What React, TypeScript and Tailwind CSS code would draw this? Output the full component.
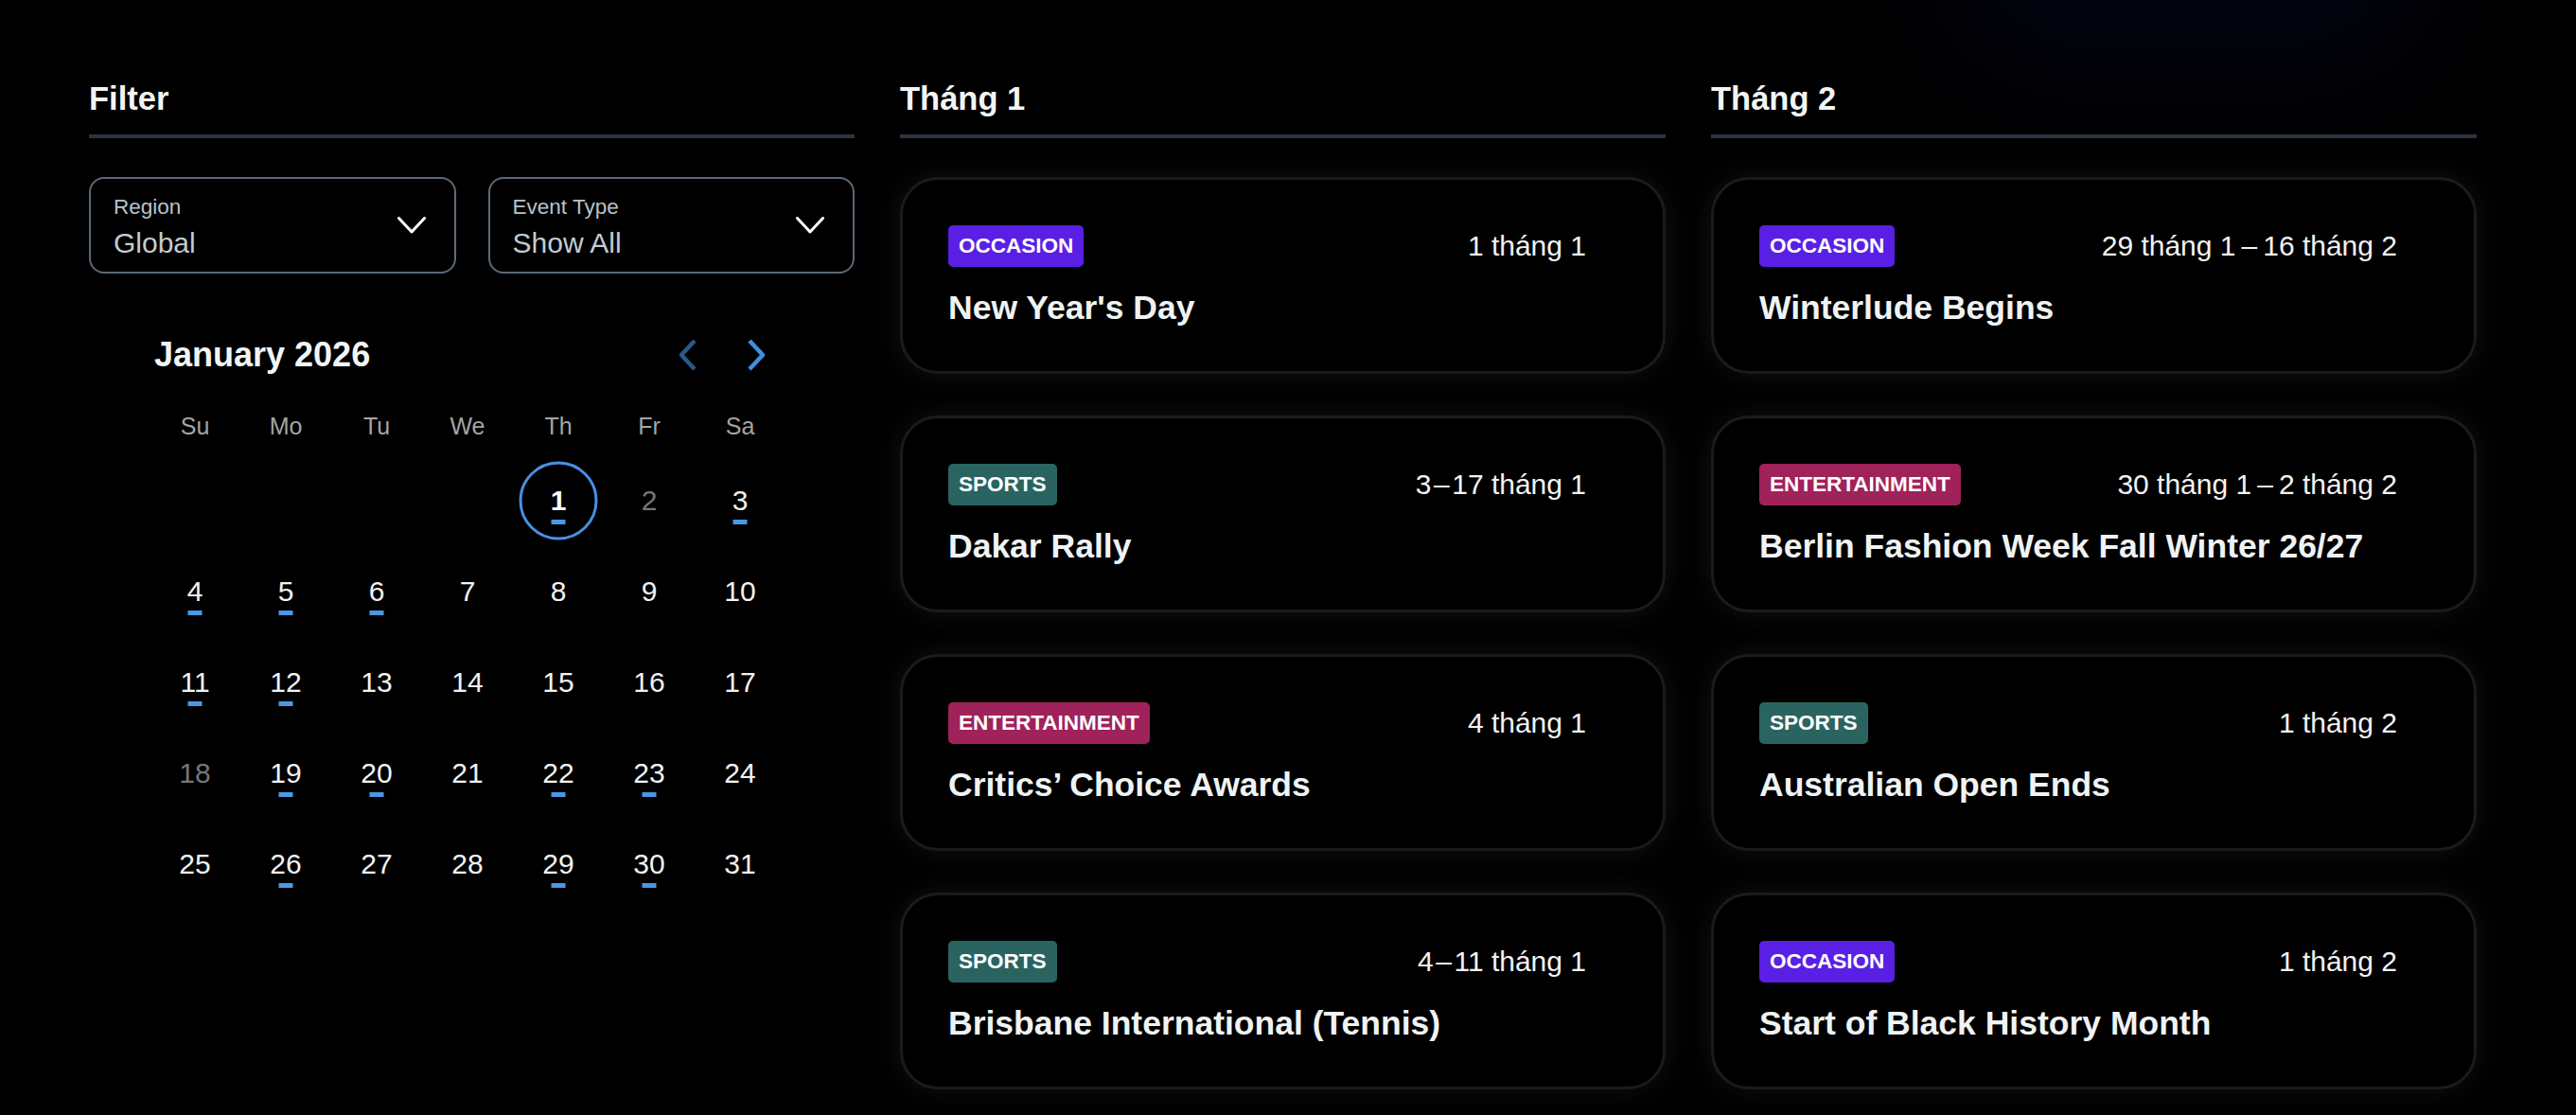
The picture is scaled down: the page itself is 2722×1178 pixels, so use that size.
const FONT = { fontFamily: '"Liberation Sans", Arial, sans-serif' };

type Badge = "OCCASION" | "SPORTS" | "ENTERTAINMENT";

type EventItem = {
  badge: Badge;
  date: string;
  title: string;
};

const badgeColor: Record<Badge, string> = {
  OCCASION: "bg-[#5a1fe4]",
  SPORTS: "bg-[#2a6461]",
  ENTERTAINMENT: "bg-[#a0225a]",
};

const january: EventItem[] = [
  { badge: "OCCASION", date: "1 tháng 1", title: "New Year's Day" },
  { badge: "SPORTS", date: "3\u200a–\u200a17 tháng 1", title: "Dakar Rally" },
  { badge: "ENTERTAINMENT", date: "4 tháng 1", title: "Critics’ Choice Awards" },
  { badge: "SPORTS", date: "4\u200a–\u200a11 tháng 1", title: "Brisbane International (Tennis)" },
];

const february: EventItem[] = [
  { badge: "OCCASION", date: "29 tháng 1\u2009–\u200916 tháng 2", title: "Winterlude Begins" },
  { badge: "ENTERTAINMENT", date: "30 tháng 1\u2009–\u20092 tháng 2", title: "Berlin Fashion Week Fall Winter 26/27" },
  { badge: "SPORTS", date: "1 tháng 2", title: "Australian Open Ends" },
  { badge: "OCCASION", date: "1 tháng 2", title: "Start of Black History Month" },
];

const marked = new Set([1, 3, 4, 5, 6, 11, 12, 19, 20, 22, 23, 26, 29, 30]);
const dimmed = new Set([2, 18]);

function Heading({ children }: { children: React.ReactNode }) {
  return (
    <div className="pt-[84px] pb-[18px] border-b-4 border-[#2c353e]">
      <h2 className="text-[34.5px] leading-[40px] font-bold text-[#f2f5f5]">{children}</h2>
    </div>
  );
}

function Chevron() {
  return (
    <svg width="30" height="18" viewBox="0 0 30 18" fill="none">
      <polyline points="1.5,1.5 15,16 28.5,1.5" stroke="#ffffff" strokeWidth="3" strokeLinecap="round" strokeLinejoin="round" />
    </svg>
  );
}

function Select({ label, value }: { label: string; value: string }) {
  return (
    <div className="h-[102px] rounded-[16px] border-2 border-[#5c6a77] pl-[24px] pr-[30px] flex items-center justify-between">
      <div className="flex flex-col self-start pt-[17px]">
        <span className="text-[22.5px] leading-[26px] text-[#b9c2cb]">{label}</span>
        <span className="mt-[8px] text-[30px] leading-[34px] text-[#c3cbd3]">{value}</span>
      </div>
      <Chevron />
    </div>
  );
}

function Calendar() {
  const cells: (number | null)[] = [null, null, null, null];
  for (let d = 1; d <= 31; d++) cells.push(d);
  return (
    <div className="ml-[64px] w-[672px] mt-[64px]">
      <div className="flex items-center justify-between h-[44px]">
        <span className="pl-[5px] text-[36px] leading-[44px] font-bold text-[#f2f5f5]">January 2026</span>
        <div className="flex items-center gap-[50px] pr-[20px]">
          <svg width="22" height="34" viewBox="0 0 22 34" fill="none">
            <polyline points="18,2 4,17 18,32" stroke="#28598a" strokeWidth="4.5" strokeLinejoin="round" />
          </svg>
          <svg width="22" height="34" viewBox="0 0 22 34" fill="none">
            <polyline points="4,2 18,17 4,32" stroke="#3f90e2" strokeWidth="4.5" strokeLinejoin="round" />
          </svg>
        </div>
      </div>
      <div className="mt-[34px] grid grid-cols-7 h-[40px] items-center">
        {["Su", "Mo", "Tu", "We", "Th", "Fr", "Sa"].map((d) => (
          <span key={d} className="text-center text-[25px] text-[#a4a4a4]">
            {d}
          </span>
        ))}
      </div>
      <div className="mt-[10px] grid grid-cols-7">
        {cells.map((d, i) => (
          <div key={i} className="relative h-[96px] flex items-center justify-center">
            {d === 1 && (
              <div className="absolute left-1/2 top-1/2 -translate-x-1/2 -translate-y-1/2 w-[83px] h-[83px] rounded-full border-[3px] border-[#4a90e2]" />
            )}
            {d !== null && (
              <span
                className={`text-[30px] leading-[30px] ${d === 1 ? "font-bold text-white" : dimmed.has(d) ? "text-[#757575]" : "text-[#f2f2f2]"}`}
              >
                {d}
              </span>
            )}
            {d !== null && marked.has(d) && (
              <div className="absolute left-1/2 -translate-x-1/2 top-[68px] w-[15px] h-[5px] bg-[#4a97e6]" />
            )}
          </div>
        ))}
      </div>
    </div>
  );
}

function EventCard({ item }: { item: EventItem }) {
  return (
    <div className="h-[208px] rounded-[40px] border-[3px] border-[#1b1b1b] bg-black shadow-[0_0_32px_rgba(255,255,255,0.07)] px-[48px] pt-[48px]">
      <div className="flex items-center justify-between pr-[33px]">
        <span
          className={`${badgeColor[item.badge]} h-[44px] px-[11px] rounded-[5px] flex items-center text-[22.5px] font-bold text-white`}
        >
          {item.badge}
        </span>
        <span className="text-[30px] leading-[34px] text-[#f2f2f2]">{item.date}</span>
      </div>
      <div className="mt-[22px] text-[35.5px] leading-[42px] font-bold text-[#eff3f3] whitespace-nowrap">{item.title}</div>
    </div>
  );
}

function MonthColumn({ name, items }: { name: string; items: EventItem[] }) {
  return (
    <div className="flex flex-col">
      <Heading>{name}</Heading>
      <div className="mt-[41px] flex flex-col gap-[44px]">
        {items.map((it) => (
          <EventCard key={it.title} item={it} />
        ))}
      </div>
    </div>
  );
}

export default function App() {
  return (
    <div className="relative w-full h-[1178px] overflow-hidden bg-black" style={FONT}>
      <div className="pointer-events-none absolute left-[2050px] top-[-160px] w-[520px] h-[240px] rounded-full bg-[#0b0b2e] opacity-40 blur-3xl" />
      <div className="relative pl-[94px] pr-[105px] grid grid-cols-3 gap-x-[48px]">
        <div className="flex flex-col">
          <Heading>Filter</Heading>
          <div className="mt-[41px] grid grid-cols-2 gap-[34px]">
            <Select label="Region" value="Global" />
            <Select label="Event Type" value="Show All" />
          </div>
          <Calendar />
        </div>
        <MonthColumn name="Tháng 1" items={january} />
        <MonthColumn name="Tháng 2" items={february} />
      </div>
    </div>
  );
}
